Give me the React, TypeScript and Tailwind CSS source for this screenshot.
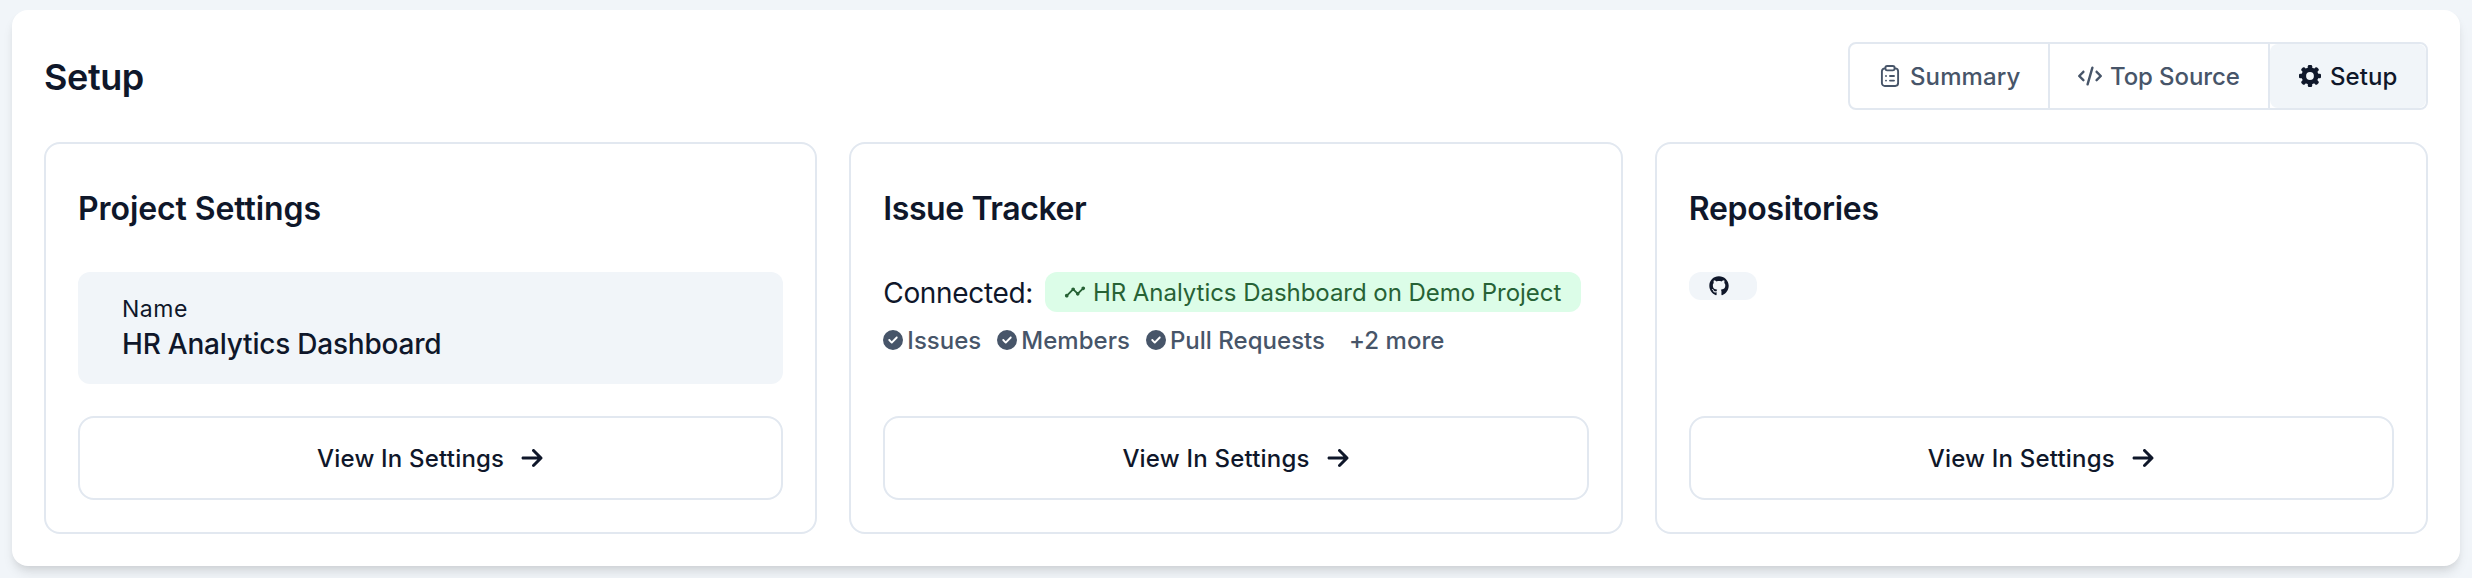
import React from "react";
import { FaArrowRight, FaCircleCheck, FaCode } from "react-icons/fa6";
import { FaGithub } from "react-icons/fa";
import { MdTimeline } from "react-icons/md";

const features = ["Issues", "Members", "Pull Requests"];
const teeth = [0, 45, 90, 135, 180, 225, 270, 315];

function ClipboardIcon({ className }: { className?: string }) {
  return (
    <svg
      className={className}
      viewBox="0 0 24 24"
      fill="none"
      stroke="currentColor"
      strokeWidth="1.9"
      strokeLinecap="round"
    >
      <path d="M7.2 4.4H6.8a2.9 2.9 0 0 0-2.9 2.9v11.8a2.9 2.9 0 0 0 2.9 2.9h10.4a2.9 2.9 0 0 0 2.9-2.9V7.3a2.9 2.9 0 0 0-2.9-2.9h-.4" />
      <rect x="7.4" y="2" width="9.2" height="4.4" rx="1.8" />
      <path d="M8 12h.01M8 16.6h.01M12 12h4M12 16.6h4" />
    </svg>
  );
}

function GearIcon({ className }: { className?: string }) {
  return (
    <svg className={className} viewBox="-11 -11 22 22" fill="currentColor">
      <circle r="6.2" fill="none" stroke="currentColor" strokeWidth="4.6" />
      {teeth.map((angle) => (
        <rect key={angle} x="-2.2" y="-11" width="4.4" height="5" rx="1.3" transform={`rotate(${angle})`} />
      ))}
    </svg>
  );
}

function SetupCard({ title, children }: { title: React.ReactNode; children: React.ReactNode }) {
  return (
    <div className="flex h-[392px] flex-col rounded-2xl border-2 border-[#e2e8f0] p-8">
      <h2 className="mt-[9px] text-[32px] leading-[48px] font-semibold tracking-[-0.25px]">{title}</h2>
      <div className="mt-[39px] flex-1">{children}</div>
      <button className="flex h-[84px] items-center justify-center gap-4 rounded-2xl border-2 border-[#e2e8f0] text-2xl font-medium tracking-[0.2px]">
        <span className="pt-0.5">View In Settings</span>
        <FaArrowRight className="h-6 w-6" />
      </button>
    </div>
  );
}

export default function App() {
  return (
    <div className="h-[578px] overflow-hidden bg-[#f1f5f9] px-3 pt-2.5 font-['Inter',sans-serif] text-[#0f172a]">
      <div className="h-[556px] rounded-2xl bg-white p-8 shadow-[0_8px_12px_-2px_rgba(0,0,0,0.1),0_4px_8px_-4px_rgba(0,0,0,0.1)]">
        {/* Header */}
        <div className="flex h-[68px] items-center justify-between">
          <h1 className="pt-0.5 text-4xl font-semibold tracking-[-0.4px]">Setup</h1>
          <div className="flex h-[68px] overflow-hidden rounded-lg border-2 border-[#e2e8f0] text-2xl font-medium tracking-[0.1px] text-[#475569]">
            <button className="flex w-[200px] items-center border-r-2 border-[#e2e8f0] pl-7">
              <ClipboardIcon className="mr-2 h-6 w-6" />
              <span className="pt-0.5">Summary</span>
            </button>
            <button className="flex w-[220px] items-center border-r-2 border-[#e2e8f0] pl-7">
              <FaCode className="mr-2 h-6 w-6" />
              <span className="pt-0.5 tracking-[-0.1px]">Top Source</span>
            </button>
            <button className="flex w-[156px] items-center rounded-lg bg-[#f1f5f9] pl-[29px] text-[#0f172a]">
              <GearIcon className="mr-[9px] h-[22px] w-[22px]" />
              <span className="pt-0.5">Setup</span>
            </button>
          </div>
        </div>

        {/* Cards */}
        <div className="mt-8 grid grid-cols-3 gap-8">
          <SetupCard title={<span className="tracking-[-0.08px]">Project Settings</span>}>
            <div className="h-28 rounded-xl bg-[#f1f5f9] px-11 pt-5">
              <p className="pt-px text-[23px] leading-8 tracking-[0.5px]">Name</p>
              <p className="-mt-px text-[28px] leading-10 font-medium tracking-[-0.22px]">HR Analytics Dashboard</p>
            </div>
          </SetupCard>

          <SetupCard title={<span className="tracking-[-0.42px]">Issue Tracker</span>}>
            <div className="flex h-10 items-center whitespace-nowrap">
              <span className="pt-0.5 text-[28px] tracking-[-0.35px]">Connected:</span>
              <span className="ml-3 flex h-10 items-center rounded-xl bg-[#dcfde8] px-5 text-2xl tracking-[-0.04px] text-[#276235]">
                <MdTimeline className="mr-[7px] -ml-px h-[22px] w-[22px]" />
                <span className="pt-0.5">HR Analytics Dashboard on Demo Project</span>
              </span>
            </div>
            <div className="mt-2 flex h-10 items-center text-2xl font-medium tracking-[0.02px] whitespace-nowrap text-[#475569]">
              {features.map((feature) => (
                <span key={feature} className="mr-4 flex items-center gap-1">
                  <FaCircleCheck className="h-5 w-5" />
                  <span className="pt-0.5">{feature}</span>
                </span>
              ))}
              <span className="ml-2 pt-0.5">+2 more</span>
            </div>
          </SetupCard>

          <SetupCard title="Repositories">
            <div className="flex h-7 w-[68px] items-center rounded-xl bg-[#f1f5f9] pl-5">
              <FaGithub className="h-5 w-5" />
            </div>
          </SetupCard>
        </div>
      </div>
    </div>
  );
}
